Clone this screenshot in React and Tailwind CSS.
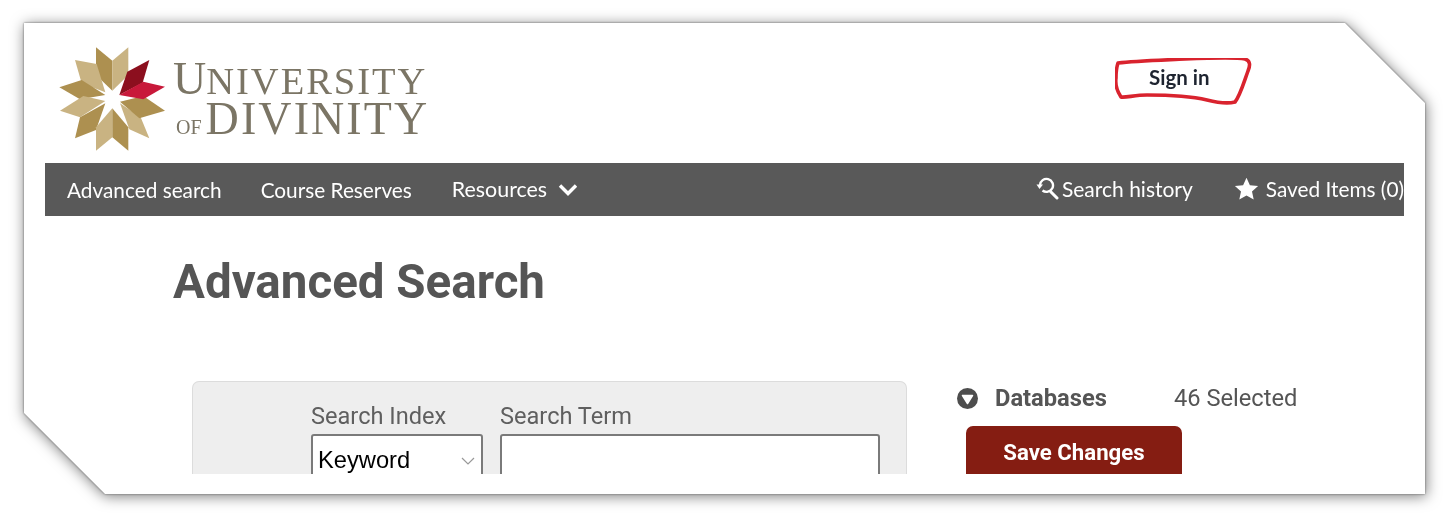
import React from "react";

function StarLogo() {
  const s = (pts, fill) => <polygon points={pts} fill={fill} />;
  return (
    <svg width="125" height="120" viewBox="0 0 375 360" className="shrink-0">
      {s("138,22 187,62 187,152 138,105", "#ad9050")}
      {s("235,22 187,62 187,152 235,105", "#c9b382")}
      {s("75,60 140,72 166,157 95,130", "#c9b382")}
      {s("28,142 95,120 166,165 90,178", "#ad9050")}
      {s("30,212 100,168 166,183 90,232", "#c9b382")}
      {s("75,295 90,232 166,190 138,270", "#ad9050")}
      {s("138,332 138,262 187,205 187,292", "#c9b382")}
      {s("235,332 235,262 187,205 187,292", "#ad9050")}
      {s("298,295 272,232 210,190 238,268", "#c9b382")}
      {s("345,212 268,235 210,185 280,168", "#ad9050")}
      {s("298,60 278,128 208,165 232,95", "#8c0f1e")}
      {s("345,140 280,178 208,165 280,125", "#c8193a")}
    </svg>
  );
}

function Wordmark() {
  return (
    <div className="ml-[-2px] mt-[19px] flex flex-col font-['Liberation_Serif',serif] text-[#7b7565]">
      <div className="flex h-[40px] items-baseline leading-[40px]">
        <span className="text-[46px]">U</span>
        <span className="text-[38.5px] tracking-[2px]">NIVERSITY</span>
      </div>
      <div className="flex h-[40px] items-baseline leading-[40px]">
        <span className="ml-[3px] mr-[4px] text-[20px]">OF</span>
        <span className="text-[46px] tracking-[2.1px]">DIVINITY</span>
      </div>
    </div>
  );
}

function SignIn() {
  return (
    <div className="relative ml-auto mr-[153px] mt-[18px] h-[46px] w-[136px] pl-[34px] pt-[6px] font-['Lato',sans-serif] text-[20.5px] font-bold leading-[26px] text-[#1e2430]">
      Sign in
      <svg width="140" height="50" viewBox="0 0 140 50" fill="none" className="absolute left-0 top-0">
        <path
          d="M3 5 C20 3 50 2 70 1 C95 0 120 -1 130 1 C136 3 135 8 133 13 C129 24 125 38 120 44 C112 46 100 44 92 42 C75 38 55 37 32 37 C20 37 10 40 6 39 C2 33 0 27 1 20 C1 13 2 8 3 5 Z"
          stroke="#d9232e"
          strokeWidth="3.6"
          strokeLinejoin="round"
        />
      </svg>
    </div>
  );
}

function HistoryIcon() {
  return (
    <svg width="24" height="24" viewBox="0 0 24 24" fill="none" stroke="white" strokeWidth="2.4" className="shrink-0">
      <path d="M5 8 A6.5 6.5 0 1 1 7.5 13.5" />
      <path d="M1.5 7.5 L8 7.5 L4.5 12 Z" fill="white" stroke="none" />
      <path d="M15.5 14.5 L22 21" strokeWidth="3" strokeLinecap="round" />
    </svg>
  );
}

function NavBar() {
  return (
    <nav className="flex h-[53px] items-center bg-[#595959] pl-[22px] font-['Lato',sans-serif] text-[20.8px] text-white">
      <a>Advanced search</a>
      <a className="ml-[39px]">Course Reserves</a>
      <a className="ml-[40px] text-[21.4px]">Resources</a>
      <svg width="20" height="14" viewBox="0 0 20 14" fill="none" stroke="white" strokeWidth="3.4" className="ml-[11px]">
        <path d="M2 2.5 L10 10.5 L18 2.5" />
      </svg>
      <div className="mb-[2px] ml-auto flex items-center">
        <HistoryIcon />
        <a className="ml-[3px] text-[21px]">Search history</a>
        <svg width="25" height="24" viewBox="0 0 24 24" fill="white" className="ml-[41px]">
          <path d="M12 0.8 L15.4 8.2 L23.6 9.1 L17.5 14.6 L19.2 22.6 L12 18.5 L4.8 22.6 L6.5 14.6 L0.4 9.1 L8.6 8.2 Z" />
        </svg>
        <a className="ml-[7px] whitespace-nowrap">Saved Items (0)</a>
      </div>
    </nav>
  );
}

function SearchPanel() {
  return (
    <section className="h-[93px] w-[715px] overflow-hidden rounded-t-[7px] border border-b-0 border-[#dcdcdc] bg-[#eeeeee] pl-[118px] pt-[20px] font-['Roboto',sans-serif]">
      <div className="flex gap-[17px]">
        <div className="flex w-[172px] flex-col">
          <label className="h-[32px] text-[23.6px] leading-[28px] text-[#5f5f5f]">Search Index</label>
          <div className="flex h-[60px] items-start justify-between rounded-[3px] border-2 border-[#7a7a7a] bg-white pl-[5px] pr-[6px] pt-[8px] font-['Liberation_Sans',sans-serif] text-[23.7px] leading-[32px] text-black">
            Keyword
            <svg width="14" height="8" viewBox="0 0 14 8" fill="none" stroke="#999" strokeWidth="1.2" className="mt-[13px]">
              <path d="M1 1 L7 7 L13 1" />
            </svg>
          </div>
        </div>
        <div className="flex w-[380px] flex-col">
          <label className="h-[32px] text-[23.6px] leading-[28px] text-[#5f5f5f]">Search Term</label>
          <input className="h-[60px] rounded-[3px] border-2 border-[#7a7a7a] bg-white" />
        </div>
      </div>
    </section>
  );
}

function Side() {
  return (
    <aside className="ml-[50px] mt-[-1px] flex flex-col font-['Roboto',sans-serif]">
      <div className="flex h-[36px] items-center text-[23.7px] text-[#555555]">
        <svg width="21" height="21" viewBox="0 0 21 21" className="shrink-0">
          <circle cx="10.5" cy="10.5" r="10.5" fill="#4d4d4d" />
          <path d="M5.5 7.5 H15.5 L10.5 15.5 Z" fill="white" stroke="white" strokeWidth="1.5" strokeLinejoin="round" />
        </svg>
        <span className="ml-[17px] mt-[2px] font-bold">Databases</span>
        <span className="ml-[67px] mt-[2px]">46 Selected</span>
      </div>
      <button className="ml-[9px] mt-[10px] flex h-[48px] w-[216px] items-center justify-center rounded-t-[7px] bg-[#851d12] pt-[6px] text-[22.2px] font-bold text-white">
        Save Changes
      </button>
    </aside>
  );
}

export default function App() {
  return (
    <div className="h-[519px] w-full overflow-hidden bg-white pl-[24px] pt-[23px]">
      <div className="h-[471px] w-[1401px] [filter:drop-shadow(0_0_1px_#666)_drop-shadow(1px_2px_7px_rgba(0,0,0,0.5))]">
        <div className="h-full w-full bg-white px-[21px] [clip-path:polygon(0_0,1321px_0,100%_80px,100%_100%,81px_100%,0_390px)]">
          <div className="h-[451px] overflow-hidden">
            <header className="flex h-[140px] items-start pl-[5px] pt-[17px]">
              <StarLogo />
              <Wordmark />
              <SignIn />
            </header>
            <NavBar />
            <main className="pl-[147px]">
              <div className="ml-[-19px] flex h-[165px] items-start pt-[37px]">
                <h1 className="font-['Roboto',sans-serif] text-[47.5px] font-bold leading-[58px] text-[#555555]">
                  Advanced Search
                </h1>
              </div>
              <div className="flex items-start">
                <SearchPanel />
                <Side />
              </div>
            </main>
          </div>
        </div>
      </div>
    </div>
  );
}
